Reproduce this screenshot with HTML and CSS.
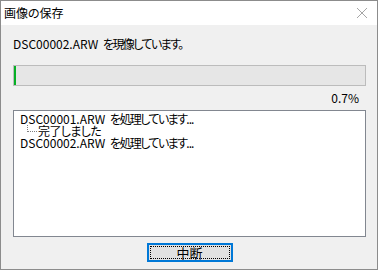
FILE: index.html
```html
<!DOCTYPE html>
<html>
<head>
    <meta charset="UTF-8">
    <title>画像の保存</title>
    <link rel="stylesheet" href="styles.css">
</head>
<body>
    <div class="window">
        <div class="titlebar">
            <span class="title">画像の保存</span>
            <svg class="close" width="12" height="12" viewBox="0 0 12 12">
                <path d="M1 1 L11 11 M11 1 L1 11" stroke="#a6a6a6" stroke-width="1" fill="none"/>
            </svg>
        </div>
        <div class="content">
            <div class="message">DSC00002.ARW <span class="ja">を現像しています。</span></div>
            <div class="progress">
                <div class="progress-fill" style="width: 2px"></div>
            </div>
            <div class="percent">0.7%</div>
            <div class="log">
                <div class="log-line">DSC00001.ARW <span class="ja">を処理しています<span class="dots">...</span></span></div>
                <div class="log-line child">
                    <span class="branch"></span><span class="ja">完了しました</span>
                </div>
                <div class="log-line">DSC00002.ARW <span class="ja">を処理しています<span class="dots">...</span></span></div>
            </div>
            <div class="actions">
                <button class="cancel-btn"><span class="focus">中断</span></button>
            </div>
        </div>
    </div>
</body>
</html>
```

FILE: styles.css
```css
body {
    margin: 0;
    font-family: "Noto Sans CJK JP", "Noto Sans", sans-serif;
    font-size: 12px;
    font-feature-settings: "palt";
    color: #000;
}
.window {
    width: 378px;
    height: 270px;
    box-sizing: border-box;
    border: 1px solid #8c8c8c;
    background: #f0f0f0;
    display: flex;
    flex-direction: column;
}
.titlebar {
    height: 24px;
    background: #fff;
    display: flex;
    align-items: center;
    justify-content: space-between;
    padding: 0 9px 0 3px;
}
.title {
    font-size: 12px;
    line-height: 16px;
}
.close {
    display: block;
}
.content {
    padding: 11px 11px 0 12px;
}
.ja {
    margin-left: 2px;
    letter-spacing: -1.6px;
}
.dots {
    letter-spacing: -1px;
}
.message {
    line-height: 16px;
    height: 16px;
}
.progress {
    margin-top: 13px;
    height: 19px;
    border: 1px solid #bcbcbc;
    background: #e6e6e6;
}
.progress-fill {
    height: 100%;
    background: #06b025;
}
.percent {
    text-align: right;
    padding-right: 7px;
    margin-top: 4px;
    line-height: 16px;
}
.log {
    margin-top: 4px;
    height: 121px;
    border: 1px solid #828790;
    background: #fff;
    padding: 2px 6px;
}
.log-line {
    line-height: 12px;
    height: 12px;
    white-space: nowrap;
}
.log-line.child {
    display: flex;
    align-items: flex-start;
}
.log-line.child .ja {
    margin-left: 0;
    letter-spacing: -0.6px;
}
.branch {
    width: 9px;
    height: 6px;
    margin-left: 7px;
    margin-right: 1px;
    border-left: 1px dotted #808080;
    border-bottom: 1px dotted #808080;
}
.actions {
    display: flex;
    justify-content: center;
    margin-top: 6px;
}
.cancel-btn {
    width: 86px;
    height: 19px;
    padding: 1px;
    border: 2px solid #0078d7;
    background: #e1e1e1;
    font-family: inherit;
    font-size: 13px;
    display: flex;
}
.focus {
    flex: 1;
    border: 1px dotted #000;
    line-height: 11px;
    text-align: center;
}
```
